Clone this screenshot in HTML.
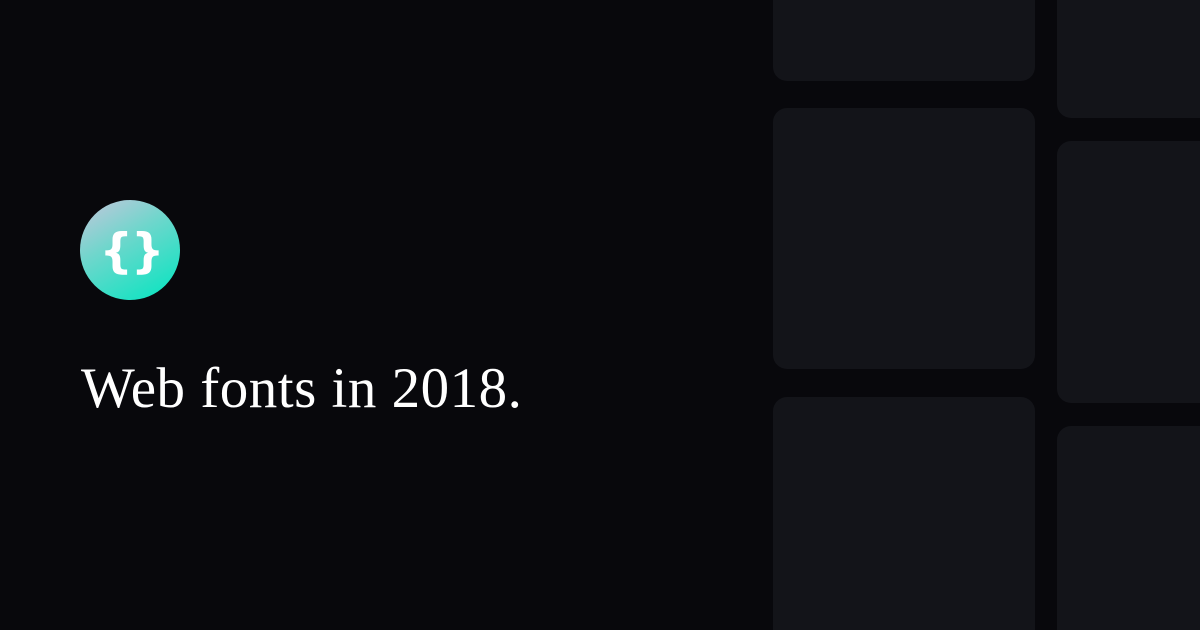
<!DOCTYPE html>
<html><head><meta charset="utf-8"><style>
html,body{margin:0;padding:0;width:1200px;height:630px;overflow:hidden}
body{background:#08080c;position:relative}
.c{position:absolute;background:#131419;border-radius:14px}
.sq{border-bottom-left-radius:0;border-bottom-right-radius:0}
.logo{position:absolute;left:80px;top:200px;width:100px;height:100px;border-radius:50%;
background:linear-gradient(150deg,#c6c6dc 0%,#6fd6cc 40%,#00e6c0 100%)}
h1{position:absolute;left:81px;top:356px;margin:0;font-family:"Liberation Serif",serif;font-weight:normal;font-size:57px;color:#fff;letter-spacing:0.5px;white-space:nowrap}
</style></head><body>
<div class="c" style="left:773px;top:0;width:262px;height:81px;border-top-left-radius:0;border-top-right-radius:0"></div>
<div class="c" style="left:773px;top:108px;width:262px;height:261px"></div>
<div class="c sq" style="left:773px;top:397px;width:262px;height:233px"></div>
<div class="c" style="left:1057px;top:0;width:143px;height:118px;border-radius:0 0 0 14px"></div>
<div class="c" style="left:1057px;top:141px;width:143px;height:262px;border-radius:14px 0 0 14px"></div>
<div class="c" style="left:1057px;top:426px;width:143px;height:204px;border-radius:14px 0 0 0"></div>
<div class="logo"><svg width="100" height="100"><text x="51" y="67" text-anchor="middle" font-family="DejaVu Sans,Liberation Sans,sans-serif" font-weight="bold" font-size="47" fill="#fff" letter-spacing="-2">{}</text></svg></div>
<h1>Web fonts in 2018.</h1>
</body></html>
